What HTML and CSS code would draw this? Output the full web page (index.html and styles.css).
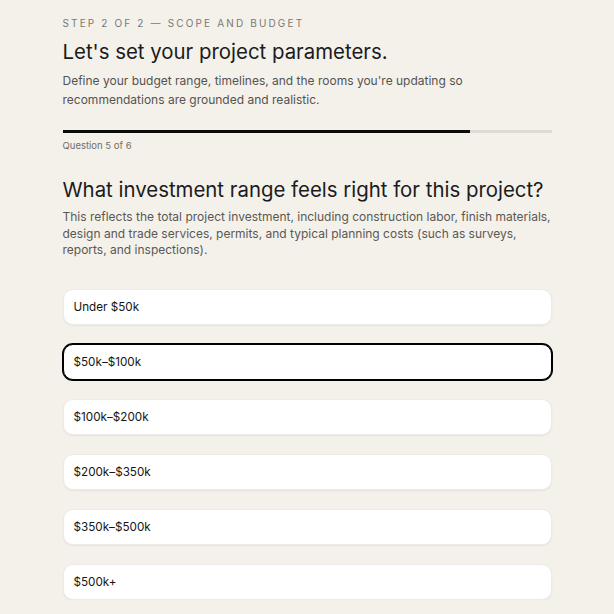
FILE: index.html
```html
<!DOCTYPE html>
<html lang="en">
<head>
<meta charset="utf-8">
<title>Scope and budget</title>
<link rel="stylesheet" href="styles.css">
</head>
<body>
<main class="wrap">
  <header class="intro">
    <p class="eyebrow">Step 2 of 2 — Scope and budget</p>
    <h1 class="title">Let's set your project parameters.</h1>
    <p class="lead">Define your budget range, timelines, and the rooms you're updating so recommendations are grounded and realistic.</p>
  </header>
  <div class="progress"><div class="progress-fill" style="width:83.4%"></div></div>
  <p class="count">Question 5 of 6</p>
  <section class="question">
    <h2 class="q-title">What investment range feels right for this project?</h2>
    <p class="q-desc">This reflects the total project investment, including construction labor, finish materials, design and trade services, permits, and typical planning costs (such as surveys, reports, and inspections).</p>
  </section>
  <div class="options">
    <button class="option">Under $50k</button>
    <button class="option selected">$50k–$100k</button>
    <button class="option">$100k–$200k</button>
    <button class="option">$200k–$350k</button>
    <button class="option">$350k–$500k</button>
    <button class="option">$500k+</button>
  </div>
</main>
</body>
</html>
```
FILE: styles.css
```css
* { box-sizing: border-box; }
html, body { margin: 0; padding: 0; }
body {
  background: #f4f1eb;
  font-family: Inter, "Noto Sans", sans-serif;
  color: #1b1b1b;
}
.wrap {
  width: 489px;
  margin: 0 auto;
  padding-top: 16px;
}
.eyebrow {
  margin: 0;
  font-size: 10px;
  line-height: 14px;
  letter-spacing: 2.15px;
  text-transform: uppercase;
  color: #7a7873;
}
.title {
  margin: 8px 0 0;
  font-size: 20.4px;
  line-height: 28px;
  font-weight: 400;
  color: #1b1b1b;
}
.lead {
  margin: 5px 0 0;
  font-size: 12px;
  line-height: 19px;
  color: #55534f;
}
.progress {
  margin-top: 21px;
  height: 3px;
  background: #dedbd5;
}
.progress-fill {
  height: 100%;
  background: #0b0b0b;
}
.count {
  margin: 6px 0 0;
  font-size: 9.5px;
  line-height: 14px;
  color: #6f6d69;
}
.question { margin-top: 24px; }
.q-title {
  margin: 0;
  font-size: 20.4px;
  line-height: 26px;
  font-weight: 400;
  color: #1b1b1b;
}
.q-desc {
  margin: 6px 0 0;
  font-size: 12px;
  line-height: 16.5px;
  color: #5a5854;
}
.options {
  margin-top: 30px;
  display: flex;
  flex-direction: column;
  gap: 19px;
}
.option {
  display: block;
  width: 100%;
  height: 36px;
  padding: 0 10px;
  text-align: left;
  font-family: inherit;
  font-size: 11.7px;
  color: #161616;
  background: #fff;
  border: 1px solid #ecebe7;
  border-radius: 10px;
  box-shadow: 0 1px 2px rgba(0,0,0,0.06);
}
.option.selected {
  border-color: #000;
  box-shadow: 0 0 0 1px #000;
}
```
